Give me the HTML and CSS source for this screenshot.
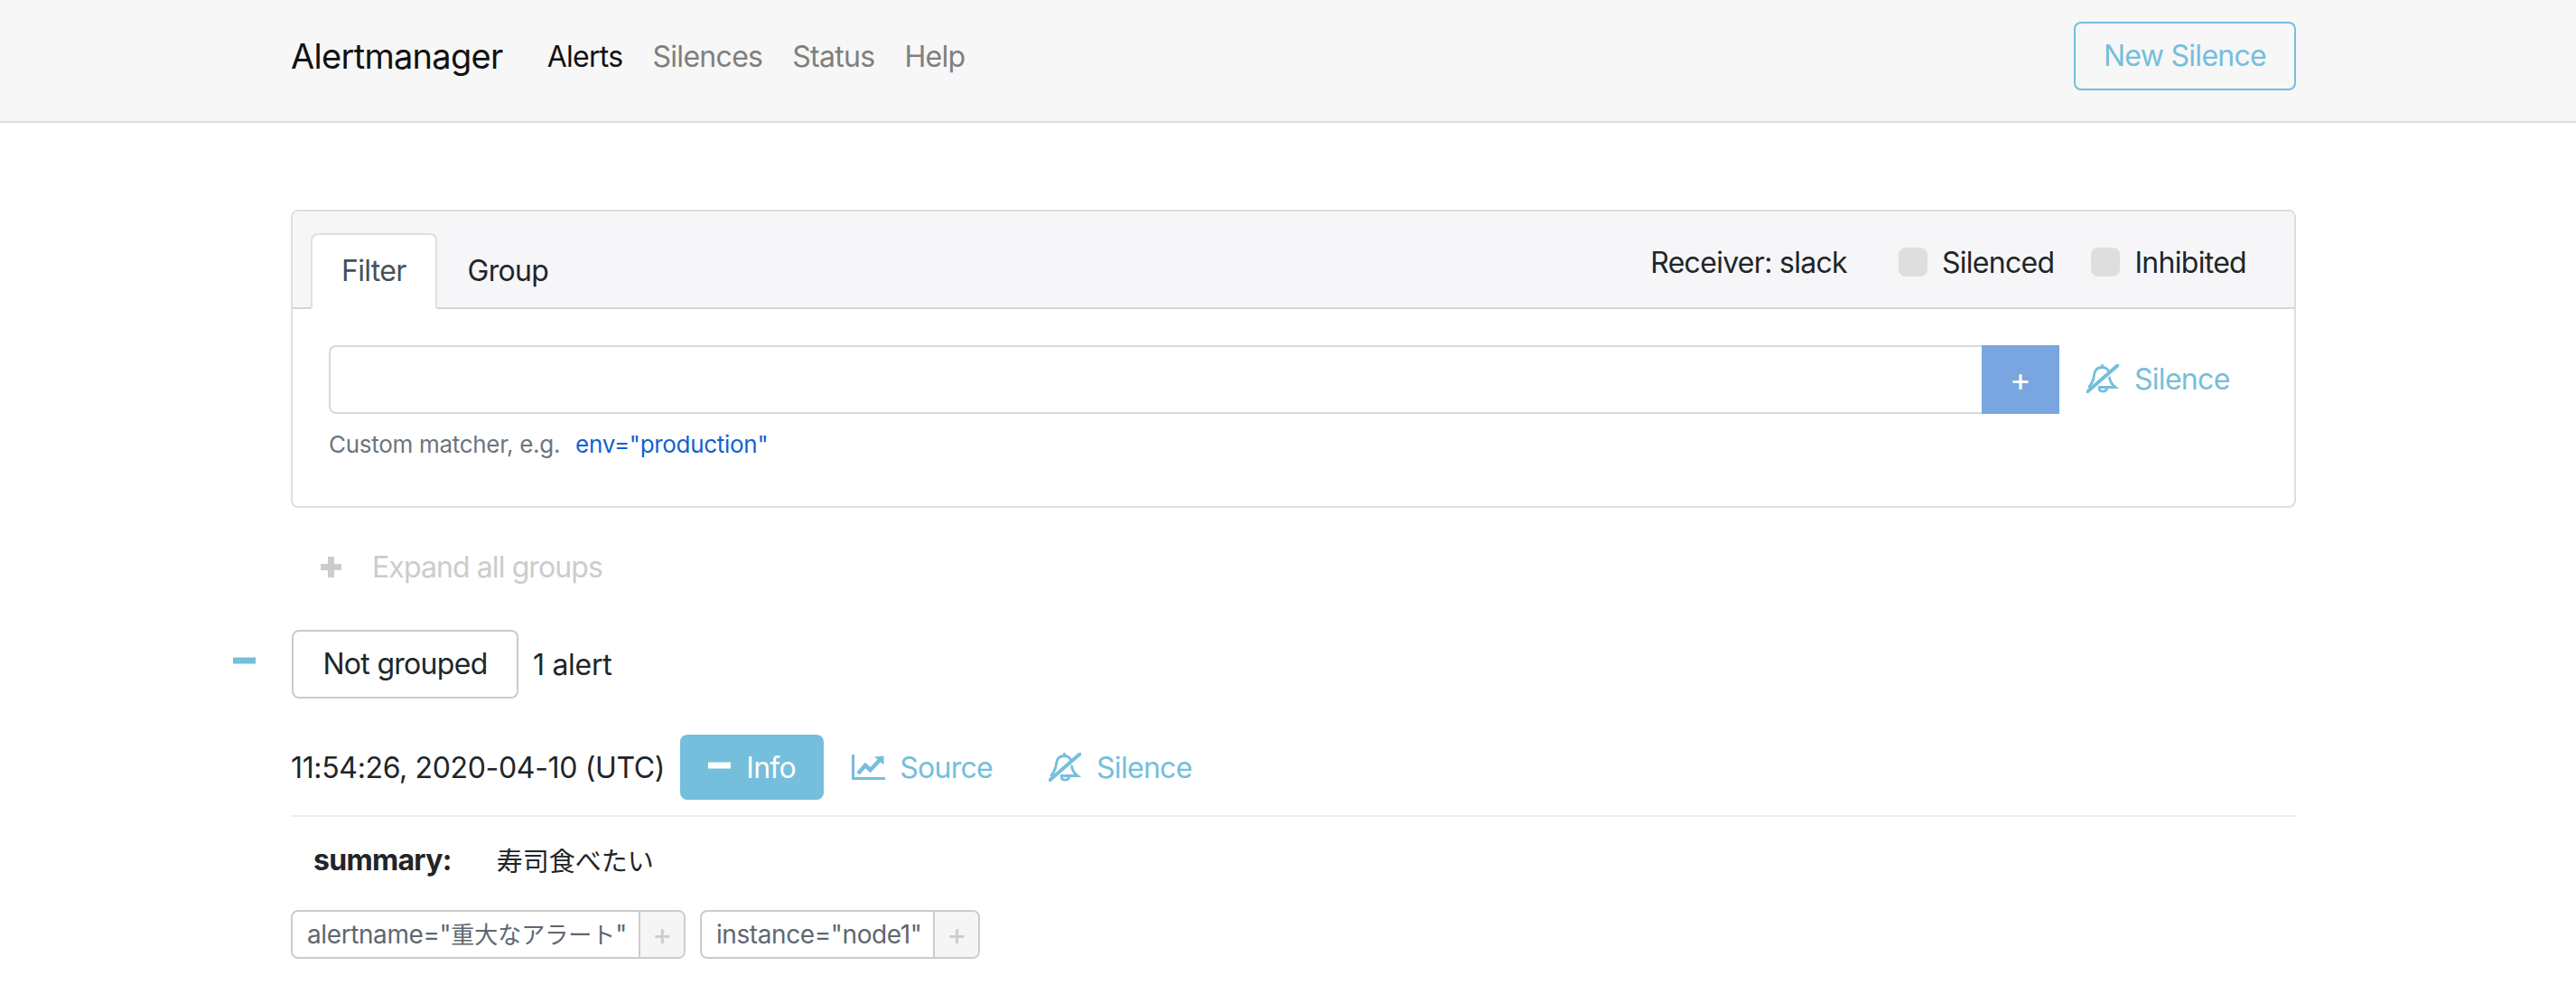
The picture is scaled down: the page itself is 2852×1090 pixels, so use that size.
FILE: index.html
```html
<!DOCTYPE html>
<html lang="en">
<head>
    <meta charset="UTF-8">
    <title>Alertmanager</title>
    <link rel="stylesheet" href="styles.css">
</head>
<body>
    <nav class="navbar">
        <div class="navbar-inner">
            <a class="brand">Alertmanager</a>
            <ul class="nav-links">
                <li class="active">Alerts</li>
                <li>Silences</li>
                <li>Status</li>
                <li>Help</li>
            </ul>
            <a class="btn-new">New Silence</a>
        </div>
    </nav>

    <main class="container">
        <section class="card">
            <div class="card-header">
                <div class="tabs">
                    <span class="tab active">Filter</span>
                    <span class="tab">Group</span>
                </div>
                <div class="header-right">
                    <span class="receiver">Receiver: slack</span>
                    <label class="check"><span class="box"></span>Silenced</label>
                    <label class="check"><span class="box"></span>Inhibited</label>
                </div>
            </div>
            <div class="card-body">
                <div class="filter-row">
                    <input class="filter-input" type="text">
                    <button class="add-btn">+</button>
                    <a class="icon-link filter-silence">
                        <svg class="bell" viewBox="0 0 36 32"><use href="#bell-slash"></use></svg>
                        Silence
                    </a>
                </div>
                <p class="helper">Custom matcher, e.g. <a class="example">env="production"</a></p>
            </div>
        </section>

        <div class="expand">
            <svg class="sign" viewBox="0 0 25 25"><path d="M12.5 1v23M1 12.500h23"></path></svg>
            <span>Expand all groups</span>
        </div>

        <div class="group-row">
            <svg class="sign minus" viewBox="0 0 25 8"><path d="M0 4h25"></path></svg>
            <span class="group-name">Not grouped</span>
            <span class="group-count">1 alert</span>
        </div>

        <div class="alert-row">
            <span class="timestamp">11:54:26, 2020-04-10 (UTC)</span>
            <a class="btn-info">
                <svg class="sign" viewBox="0 0 25 8"><path d="M0 4h25"></path></svg>
                Info
            </a>
            <a class="icon-link source">
                <svg class="chart" viewBox="0 0 37 28">
                    <path d="M1.500 0v26.500h35.500"></path>
                    <path class="chart-line" d="M7 21l8-9 5.500 5L31 6"></path>
                    <path class="arrow" d="M25 2.500L35.500 1.500v10z"></path>
                </svg>
                Source
            </a>
            <a class="icon-link">
                <svg class="bell" viewBox="0 0 36 32"><use href="#bell-slash"></use></svg>
                Silence
            </a>
        </div>

        <div class="annotation">
            <strong>summary:</strong>
            <span class="annotation-value">寿司食べたい</span>
        </div>

        <div class="labels">
            <div class="label"><span class="label-text">alertname="<span class="cjk">重大なアラート</span>"</span><span class="label-add">+</span></div>
            <div class="label"><span class="label-text">instance="node1"</span><span class="label-add">+</span></div>
        </div>
    </main>

    <svg class="defs" width="0" height="0">
        <symbol id="bell-slash" viewBox="0 0 36 32">
            <path d="M17.500 3.500C12 3.500 9 7 8.500 12 8 17 7 20 3 25"></path>
            <path d="M17.500 3.500c3 0 5.500 1.500 7 4"></path>
            <path d="M25.500 15c.5 4 2 7 6.500 10.500H14"></path>
            <path d="M17.500 1v2.500"></path>
            <path d="M14 27.500a4.500 4 0 0 0 8.500 0"></path>
            <path class="slash" d="M1 30.500L35 1"></path>
        </symbol>
    </svg>
</body>
</html>
```

FILE: styles.css
```css
body {
    margin: 0;
    font-family: Inter, "Noto Sans CJK JP", sans-serif;
    font-size: 32px;
    letter-spacing: -0.022em;
    color: #212529;
    background-color: #fff;
}
ul {
    list-style: none;
    margin: 0;
    padding: 0;
}
.defs {
    position: absolute;
}

/* Top bar */
.navbar {
    background-color: #f7f7f7;
    border-bottom: 2px solid #dcdcdc;
    height: 134px;
}
.navbar-inner {
    display: flex;
    align-items: center;
    height: 124px;
    margin-left: 322px;
    width: 2220px;
}
.brand {
    font-size: 38px;
    color: #111;
}
.nav-links {
    display: flex;
    gap: 33px;
    margin-left: 49px;
    color: #7f7f7f;
}
.nav-links .active {
    color: #111;
}
.btn-new {
    margin-left: auto;
    box-sizing: border-box;
    width: 246px;
    height: 76px;
    line-height: 72px;
    text-align: center;
    color: #75bedc;
    border: 2px solid #75bedc;
    border-radius: 8px;
}

/* Filter card */
.container {
    margin-left: 322px;
    width: 2220px;
    padding-top: 96px;
}
.card {
    border: 2px solid #dedede;
    border-radius: 8px;
    height: 330px;
    box-sizing: border-box;
}
.card-header {
    display: flex;
    justify-content: space-between;
    height: 106px;
    padding: 0 53px 0 20px;
    background-color: #f6f6f8;
    border-bottom: 2px solid #d5d5d8;
    border-radius: 6px 6px 0 0;
}
.tabs {
    display: flex;
    align-self: flex-end;
    margin-bottom: -2px;
}
.tab {
    box-sizing: border-box;
    height: 84px;
    padding: 0 32px;
    line-height: 80px;
    border: 2px solid transparent;
}
.tab.active {
    color: #495057;
    background-color: #fff;
    border-color: #dedede #dedede #fff;
    border-radius: 8px 8px 0 0;
}
.header-right {
    display: flex;
    align-items: center;
    margin-top: 6px;
}
.receiver {
    margin-right: 57px;
}
.check {
    display: flex;
    align-items: center;
    margin-left: 41px;
}
.receiver + .check {
    margin-left: 0;
}
.box {
    width: 32px;
    height: 32px;
    margin-right: 16px;
    border-radius: 8px;
    background-color: #dedede;
}
.card-body {
    padding: 40px 0 0 40px;
}
.filter-row {
    display: flex;
    align-items: center;
}
.filter-input {
    box-sizing: border-box;
    width: 1830px;
    height: 76px;
    padding: 0;
    border: 2px solid #d9d9d9;
    border-right: none;
    border-radius: 8px 0 0 8px;
    outline: none;
}
.add-btn {
    width: 86px;
    height: 76px;
    padding: 0;
    border: none;
    color: #fff;
    background-color: #79a6e0;
    font-family: inherit;
    font-size: 36px;
}
.icon-link {
    display: flex;
    align-items: center;
    color: #75bedc;
}
.filter-silence {
    margin: -2px 0 0 30px;
}
.helper {
    margin: 18px 0 0;
    font-size: 26px;
    letter-spacing: -0.3px;
    color: #6c757d;
}
.example {
    margin-left: 10px;
    color: #0f62d0;
}

/* Icons */
svg path {
    fill: none;
    stroke: currentColor;
    stroke-linecap: round;
}
.sign {
    width: 25px;
    stroke-width: 7px;
}
.sign path {
    stroke-linecap: butt;
}
.bell {
    width: 36px;
    height: 32px;
    margin-right: 17px;
    stroke-width: 2.800px;
}
.slash {
    stroke-width: 4px;
}
.chart {
    width: 37px;
    height: 28px;
    margin-right: 16px;
    stroke-width: 3px;
}
.chart .chart-line {
    stroke-width: 4.500px;
    stroke-linecap: butt;
}
.chart .arrow {
    fill: currentColor;
    stroke: none;
}

/* Alert list */
.expand {
    display: flex;
    align-items: center;
    margin: 46px 0 0 32px;
    color: #ccc;
}
.expand .sign {
    height: 25px;
    margin-right: 33px;
}
.expand span {
    letter-spacing: -0.9px;
}
.group-row {
    display: flex;
    align-items: center;
    margin-top: 50px;
}
.minus {
    height: 8px;
    margin: -8px 40px 0 -64px;
    color: #75bedc;
}
.group-name {
    box-sizing: border-box;
    width: 251px;
    height: 76px;
    line-height: 72px;
    text-align: center;
    border: 2px solid #ccc;
    border-radius: 8px;
}
.group-count {
    margin-left: 16px;
    letter-spacing: -0.3px;
}
.alert-row {
    display: flex;
    align-items: center;
    margin-top: 40px;
    padding-bottom: 17px;
    border-bottom: 2px solid #eee;
}
.timestamp {
    margin-right: 17px;
    letter-spacing: -0.35px;
}
.btn-info {
    display: flex;
    align-items: center;
    justify-content: center;
    width: 159px;
    height: 72px;
    color: #fff;
    background-color: #75bedc;
    border-radius: 8px;
}
.btn-info .sign {
    height: 8px;
    margin-right: 17px;
    margin-bottom: 4px;
}
.source {
    margin: 0 62px 0 31px;
}
.annotation {
    display: flex;
    align-items: center;
    margin: 26px 0 0 25px;
}
.annotation-value {
    margin-left: 50px;
    font-size: 29px;
    letter-spacing: 0;
}
.labels {
    display: flex;
    gap: 16px;
    margin-top: 35px;
}
.label {
    display: flex;
    height: 54px;
    box-sizing: border-box;
    border: 2px solid #ccc;
    border-radius: 8px;
    font-size: 28px;
    letter-spacing: -0.4px;
    line-height: 50px;
    color: #5e6770;
}
.label-text {
    padding: 0 13px 0 16px;
    white-space: nowrap;
}
.cjk {
    font-size: 26px;
    letter-spacing: 0;
}
.label-add {
    width: 48px;
    text-align: center;
    font-size: 34px;
    color: #ccc;
    background-color: #f5f5f5;
    border-left: 2px solid #ccc;
    border-radius: 0 6px 6px 0;
}
```
